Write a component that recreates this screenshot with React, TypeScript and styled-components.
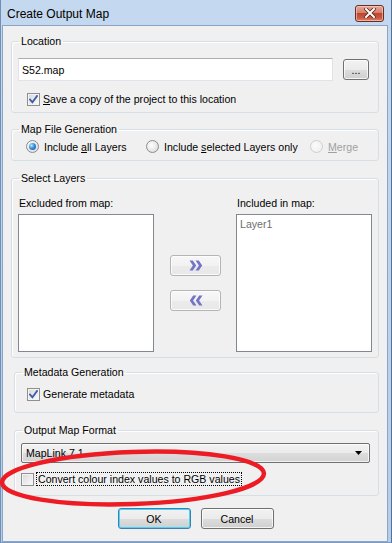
import React from 'react';
import styled, { createGlobalStyle } from 'styled-components';

const GlobalStyle = createGlobalStyle`
  html, body {
    margin: 0;
    padding: 0;
    background: #ffffff;
  }
  body {
    font-family: "Liberation Sans", Arial, sans-serif;
    font-size: 10.6px;
    color: #000;
  }
`;

const Window = styled.div`
  position: relative;
  box-sizing: border-box;
  width: 392px;
  height: 543px;
  display: flex;
  flex-direction: column;
  padding: 0 4px 1px 2px;
  background: linear-gradient(180deg, #c4d9ef 0%, #bed5ed 30%, #b5cde8 100%);
  box-shadow: inset 1px 0 0 #6f8fb5, inset -1px 0 0 #52729a, inset 0 -1px 0 #7e9cc1;
  overflow: hidden;
`;

const TitleBar = styled.div`
  height: 25px;
  flex: none;
  display: flex;
  align-items: center;
  justify-content: space-between;
  padding: 0 4px 0 5px;
  font-family: "Liberation Sans", Arial, sans-serif;
  font-size: 12px;
  color: #000;
`;

const Title = styled.span`
  padding-top: 3px;
`;

const CloseButton = styled.div`
  box-sizing: border-box;
  width: 29px;
  height: 17px;
  margin-top: 1px;
  border: 1px solid #6b2c22;
  border-radius: 3px;
  background: linear-gradient(180deg, #e8a795 0%, #d4806a 45%, #c0452f 50%, #c95a43 80%, #d98a6e 100%);
  box-shadow: inset 0 0 0 1px rgba(255, 220, 210, 0.55);
  display: flex;
  align-items: center;
  justify-content: center;
`;

const Client = styled.div`
  flex: 1;
  display: flex;
  flex-direction: column;
  padding: 8px 8px 0 8px;
  background: #f0f0f0;
  border: 1px solid #8aa5c6;
`;

const Group = styled.fieldset<{ $height: number; $mt?: number; $indent?: number }>`
  box-sizing: border-box;
  margin: ${({ $mt }) => $mt ?? 0}px 0 0 ${({ $indent }) => $indent ?? 0}px;
  padding: 0;
  min-width: 0;
  height: ${({ $height }) => $height}px;
  border: 1px solid #d5dfe5;
  border-radius: 3px;
  box-shadow: 1px 1px 0 #ffffff inset;
`;

const Legend = styled.legend`
  margin-left: 7px;
  padding: 0 2px;
  line-height: 14px;
  color: #000;
`;

const Body = styled.div<{ $pad: string }>`
  padding: ${({ $pad }) => $pad};
  display: flex;
  flex-direction: column;
`;

const TextBoxRow = styled.div`
  display: flex;
  align-items: center;
  gap: 10px;
`;

const TextBox = styled.div`
  box-sizing: border-box;
  width: 315px;
  height: 23px;
  padding: 0 3px;
  display: flex;
  align-items: center;
  background: #ffffff;
  border: 1px solid #e2e3ea;
  border-top-color: #abadb3;
`;

const PushButton = styled.div<{ $w: number; $h: number; $default?: boolean; $pale?: boolean }>`
  box-sizing: border-box;
  width: ${({ $w }) => $w}px;
  height: ${({ $h }) => $h}px;
  display: flex;
  align-items: center;
  justify-content: center;
  border: 1px solid ${({ $default, $pale }) => ($default ? '#3c7fb1' : $pale ? '#b5b5b5' : '#707070')};
  border-radius: 3px;
  background: ${({ $pale }) =>
    $pale
      ? 'linear-gradient(180deg, #f7f7f7 0%, #f2f2f2 50%, #ebebeb 51%, #e8e8e8 100%)'
      : 'linear-gradient(180deg, #f2f2f2 0%, #ebebeb 50%, #dddddd 51%, #cfcfcf 100%)'};
  box-shadow: ${({ $default }) =>
    $default ? 'inset 0 0 0 1px #48d5f8' : 'inset 0 0 0 1px rgba(255, 255, 255, 0.75)'};
  color: #000;
`;

const CheckRow = styled.div<{ $mt: number; $ml: number }>`
  display: flex;
  align-items: center;
  gap: 3px;
  height: 14px;
  margin-top: ${({ $mt }) => $mt}px;
  margin-left: ${({ $ml }) => $ml}px;
`;

const CheckBox = styled.span`
  box-sizing: border-box;
  width: 13px;
  height: 13px;
  flex: none;
  display: flex;
  align-items: center;
  justify-content: center;
  border: 1px solid #8f8f8f;
  background: linear-gradient(135deg, #d6d6d6 0%, #ececec 55%, #fbfbfb 100%);
  box-shadow: inset 0 0 0 1px #f4f4f4;
`;

const FocusLabel = styled.span`
  padding: 0 1px;
  line-height: 12px;
  outline: 1px dotted #000;
  outline-offset: 0;
`;

const RadioRow = styled.div`
  display: grid;
  grid-template-columns: 120px 164px auto;
  align-items: center;
  margin-left: 14px;
`;

const RadioItem = styled.div<{ $disabled?: boolean }>`
  display: flex;
  align-items: center;
  gap: 5px;
  color: ${({ $disabled }) => ($disabled ? '#a0a0a0' : '#000')};
`;

const Radio = styled.span<{ $on?: boolean; $disabled?: boolean }>`
  box-sizing: border-box;
  width: 13px;
  height: 13px;
  flex: none;
  border-radius: 50%;
  display: flex;
  align-items: center;
  justify-content: center;
  border: 1px solid ${({ $disabled }) => ($disabled ? '#cfcfcf' : '#8d8d8d')};
  background: ${({ $disabled }) =>
    $disabled
      ? 'radial-gradient(circle at 40% 40%, #fbfbfb, #ececec)'
      : 'radial-gradient(circle at 40% 40%, #ffffff 0%, #e6e6e6 60%, #cfcfcf 100%)'};

  &::after {
    content: '';
    display: ${({ $on }) => ($on ? 'block' : 'none')};
    width: 7px;
    height: 7px;
    border-radius: 50%;
    background: radial-gradient(circle at 35% 35%, #b8ecff 0%, #3a8ee0 45%, #174a9c 100%);
  }
`;

const LayersGrid = styled.div`
  display: grid;
  grid-template-columns: 136px 1fr 136px;
  grid-template-rows: 17px 138px;
  align-items: start;
`;

const ListLabel = styled.span`
  line-height: 13px;
  padding-left: 1px;
`;

const ListBox = styled.div`
  box-sizing: border-box;
  height: 138px;
  padding: 3px 3px;
  background: #ffffff;
  border: 1px solid #828790;
`;

const ListItem = styled.div`
  line-height: 13px;
  color: #6d6d6d;
`;

const MoveColumn = styled.div`
  align-self: center;
  display: flex;
  flex-direction: column;
  align-items: center;
  gap: 14px;
  margin-left: 1px;
`;

const SelectBox = styled.div`
  box-sizing: border-box;
  width: 349px;
  height: 20px;
  padding: 0 7px 0 4px;
  display: flex;
  align-items: center;
  justify-content: space-between;
  border: 1px solid #707070;
  border-radius: 2px;
  background: linear-gradient(180deg, #f2f2f2 0%, #ebebeb 50%, #dddddd 51%, #d3d3d3 100%);
  box-shadow: inset 0 0 0 1px rgba(255, 255, 255, 0.7);
`;

const ButtonRow = styled.div`
  display: flex;
  justify-content: center;
  gap: 10px;
  margin-top: 12px;
  padding-left: 1px;
`;

const Annotation = styled.svg`
  position: absolute;
  left: 0;
  top: 0;
  pointer-events: none;
`;

const Check = () => (
  <svg width="9" height="9" viewBox="0 0 9 9">
    <path d="M1 4.5 L3.4 7.2 L8 1" fill="none" stroke="#3d5ea6" strokeWidth="1.8" strokeLinecap="square" />
  </svg>
);

const Chevrons = ({ dir }: { dir: 'right' | 'left' }) => (
  <svg width="14" height="11" viewBox="0 0 14 11">
    <g transform={dir === 'left' ? 'translate(14 0) scale(-1 1)' : undefined}>
      <path d="M0.5 0.5 L3.8 0.5 L7.2 5.5 L3.8 10.5 L0.5 10.5 L3.9 5.5 Z" fill="#7474c6" />
      <path d="M6.5 0.5 L9.8 0.5 L13.2 5.5 L9.8 10.5 L6.5 10.5 L9.9 5.5 Z" fill="#7474c6" />
    </g>
  </svg>
);

export default function App() {
  return (
    <>
      <GlobalStyle />
      <Window>
        <TitleBar>
          <Title>Create Output Map</Title>
          <CloseButton>
            <svg width="12" height="10" viewBox="0 0 12 10">
              <path d="M2 1 L10 9 M10 1 L2 9" stroke="#5a2418" strokeWidth="3.6" strokeLinecap="square" />
              <path d="M2 1 L10 9 M10 1 L2 9" stroke="#ffffff" strokeWidth="2" strokeLinecap="square" />
            </svg>
          </CloseButton>
        </TitleBar>
        <Client>
          <Group $height={79}>
            <Legend>Location</Legend>
            <Body $pad="10px 6px 0 6px">
              <TextBoxRow>
                <TextBox>S52.map</TextBox>
                <PushButton $w={26} $h={21}>...</PushButton>
              </TextBoxRow>
              <CheckRow $mt={11} $ml={9}>
                <CheckBox>
                  <Check />
                </CheckBox>
                <span>
                  <u>S</u>ave a copy of the project to this location
                </span>
              </CheckRow>
            </Body>
          </Group>

          <Group $height={39} $mt={9}>
            <Legend>Map File Generation</Legend>
            <Body $pad="4px 0 0 0">
              <RadioRow>
                <RadioItem>
                  <Radio $on />
                  <span>
                    Include <u>a</u>ll Layers
                  </span>
                </RadioItem>
                <RadioItem>
                  <Radio />
                  <span>
                    Include <u>s</u>elected Layers only
                  </span>
                </RadioItem>
                <RadioItem $disabled>
                  <Radio $disabled />
                  <span>
                    <u>M</u>erge
                  </span>
                </RadioItem>
              </RadioRow>
            </Body>
          </Group>

          <Group $height={187} $mt={10}>
            <Legend>Select Layers</Legend>
            <Body $pad="12px 6px 0 6px">
              <LayersGrid>
                <ListLabel>Excluded from map:</ListLabel>
                <span />
                <ListLabel>Included in map:</ListLabel>
                <ListBox />
                <MoveColumn>
                  <PushButton $w={51} $h={21} $pale>
                    <Chevrons dir="right" />
                  </PushButton>
                  <PushButton $w={51} $h={21} $pale>
                    <Chevrons dir="left" />
                  </PushButton>
                </MoveColumn>
                <ListBox>
                  <ListItem>Layer1</ListItem>
                </ListBox>
              </LayersGrid>
            </Body>
          </Group>

          <Group $height={48} $mt={7} $indent={3}>
            <Legend>Metadata Generation</Legend>
            <Body $pad="8px 0 0 0">
              <CheckRow $mt={0} $ml={12}>
                <CheckBox>
                  <Check />
                </CheckBox>
                <span>Generate metadata</span>
              </CheckRow>
            </Body>
          </Group>

          <Group $height={73} $mt={10} $indent={3}>
            <Legend>Output Map Format</Legend>
            <Body $pad="6px 0 0 6px">
              <SelectBox>
                <span>MapLink 7.1</span>
                <svg width="7" height="4" viewBox="0 0 7 4">
                  <path d="M0 0 L7 0 L3.5 4 Z" fill="#000" />
                </svg>
              </SelectBox>
              <CheckRow $mt={9} $ml={0}>
                <CheckBox />
                <FocusLabel>Convert colour index values to RGB values</FocusLabel>
              </CheckRow>
            </Body>
          </Group>

          <ButtonRow>
            <PushButton $w={73} $h={21} $default>
              OK
            </PushButton>
            <PushButton $w={73} $h={21}>
              Cancel
            </PushButton>
          </ButtonRow>
        </Client>

        <Annotation width="392" height="543" viewBox="0 0 392 543">
          <ellipse
            cx="133"
            cy="478"
            rx="131"
            ry="26"
            transform="rotate(-2 133 478)"
            fill="none"
            stroke="#ed1c24"
            strokeWidth="4.5"
          />
        </Annotation>
      </Window>
    </>
  );
}
